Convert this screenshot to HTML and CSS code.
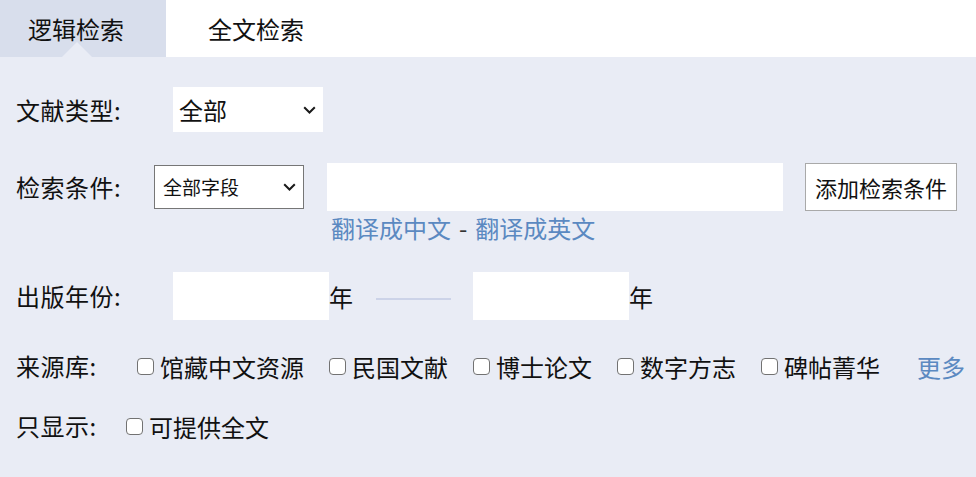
FILE: index.html
```html
<!DOCTYPE html>
<html lang="zh-CN">
<head>
<meta charset="utf-8">
<link rel="stylesheet" href="styles.css">
</head>
<body>
<div class="tabs">
  <div class="tab tab-active">逻辑检索<span class="tab-arrow"></span></div>
  <div class="tab tab-plain">全文检索</div>
</div>
<div class="panel">
  <div class="row row-type">
    <span class="label label-type">文献类型:</span>
    <div class="sel-wrap">
      <select class="sel sel-plain"><option>全部</option></select>
      <svg class="chev" width="13" height="8" viewBox="0 0 13 8"><path d="M1.2 1.2 L6.5 6.5 L11.8 1.2" fill="none" stroke="#1a1a1a" stroke-width="2"/></svg>
    </div>
  </div>
  <div class="row row-cond">
    <span class="label label-cond">检索条件:</span>
    <div class="sel-wrap">
      <select class="sel sel-field"><option>全部字段</option></select>
      <svg class="chev chev-field" width="13" height="8" viewBox="0 0 13 8"><path d="M1.2 1.2 L6.5 6.5 L11.8 1.2" fill="none" stroke="#1a1a1a" stroke-width="2"/></svg>
    </div>
    <input class="txt txt-query" type="text">
    <button class="btn-add">添加检索条件</button>
  </div>
  <div class="row row-links">
    <a class="link">翻译成中文</a><span class="sep">-</span><a class="link">翻译成英文</a>
  </div>
  <div class="row row-year">
    <span class="label label-year">出版年份:</span>
    <input class="txt txt-year" type="text">
    <span class="unit">年</span>
    <span class="dash"></span>
    <input class="txt txt-year" type="text">
    <span class="unit">年</span>
  </div>
  <div class="row row-src">
    <span class="label label-src">来源库:</span>
    <label class="chk"><span class="box"></span>馆藏中文资源</label>
    <label class="chk"><span class="box"></span>民国文献</label>
    <label class="chk"><span class="box"></span>博士论文</label>
    <label class="chk"><span class="box"></span>数字方志</label>
    <label class="chk"><span class="box"></span>碑帖菁华</label>
    <a class="link more">更多</a>
  </div>
  <div class="row row-only">
    <span class="label label-only">只显示:</span>
    <label class="chk"><span class="box"></span>可提供全文</label>
  </div>
</div>
</body>
</html>
```
FILE: styles.css
```css
* { box-sizing: border-box; }
html, body {
  margin: 0;
  padding: 0;
  background: #ffffff;
}
body {
  width: 976px;
  height: 477px;
  overflow: hidden;
  font-family: "Noto Sans CJK SC", "Noto Sans", sans-serif;
  font-size: 24px;
  color: #111;
}
.tabs {
  display: flex;
  height: 57px;
}
.tab {
  height: 57px;
  line-height: 57px;
  font-size: 24px;
  color: #111;
}
.tab-active {
  position: relative;
  width: 166px;
  padding-left: 28px;
  background: #d8deec;
}
.tab-arrow {
  position: absolute;
  left: 62px;
  bottom: 0;
  width: 0;
  height: 0;
  border-left: 15px solid transparent;
  border-right: 15px solid transparent;
  border-bottom: 15px solid #e9ecf5;
}
.tab-plain {
  padding-left: 42px;
}
.panel {
  background: #e9ecf5;
  height: 420px;
  padding-top: 30px;
}
.row {
  display: flex;
  align-items: center;
  padding-left: 16px;
}
.label {
  flex: none;
  font-size: 24px;
  line-height: 30px;
  letter-spacing: 0.5px;
}
.label-type { width: 157px; }
.label-cond { width: 138px; }
.label-year { width: 157px; }
.label-src { width: 121px; }
.label-only { width: 110px; }

.row-type { height: 45px; }
.sel-wrap {
  position: relative;
  display: flex;
  flex: none;
}
.chev {
  position: absolute;
  right: 7px;
  top: 19px;
  pointer-events: none;
}
.chev-field {
  right: 8px;
  top: 18px;
}
.sel {
  -webkit-appearance: none;
  appearance: none;
  font-family: "Noto Sans CJK SC", "Noto Sans", sans-serif;
  color: #111;
  background: #fff;
  border-radius: 0;
  outline: none;
  margin: 0;
}
.sel-plain {
  width: 150px;
  height: 45px;
  border: none;
  font-size: 24px;
  padding-left: 6px;
}
.row-cond {
  margin-top: 30px;
  height: 49px;
}
.sel-field {
  width: 150px;
  height: 44px;
  border: 1px solid #767676;
  font-size: 19px;
  padding-left: 8px;
}
.txt {
  border: none;
  background: #fff;
  outline: none;
  border-radius: 0;
  padding: 0;
  margin: 0;
}
.txt-query {
  width: 456px;
  height: 48px;
  margin-left: 23px;
}
.btn-add {
  width: 152px;
  height: 48px;
  margin-left: 22px;
  background: #fff;
  border: 1px solid #a9a9a9;
  border-radius: 0;
  font-family: "Noto Sans CJK SC", "Noto Sans", sans-serif;
  font-size: 22px;
  color: #111;
  padding: 0;
}
.row-links {
  height: 34px;
  padding-left: 331px;
  font-size: 24px;
  line-height: 34px;
}
.link {
  color: #5b89c1;
  text-decoration: none;
}
.sep {
  color: #333;
  margin: 0 8px;
}
.row-year {
  margin-top: 27px;
  height: 48px;
}
.txt-year {
  width: 156px;
  height: 48px;
}
.unit {
  font-size: 24px;
}
.dash {
  width: 75px;
  height: 2px;
  background: #ccd3e8;
  margin: 6px 22px 0 23px;
}
.row-src {
  margin-top: 31px;
  height: 30px;
}
.chk {
  display: flex;
  align-items: center;
  font-size: 24px;
  margin-right: 25px;
  white-space: nowrap;
}
.box {
  display: block;
  width: 17px;
  height: 17px;
  margin: 0 6px 0 0;
  background: #fff;
  border: 1.5px solid #727272;
  border-radius: 4px;
  flex: none;
}
.more {
  margin-left: 12px;
  font-size: 24px;
}
.row-only {
  margin-top: 30px;
  height: 30px;
}
```
